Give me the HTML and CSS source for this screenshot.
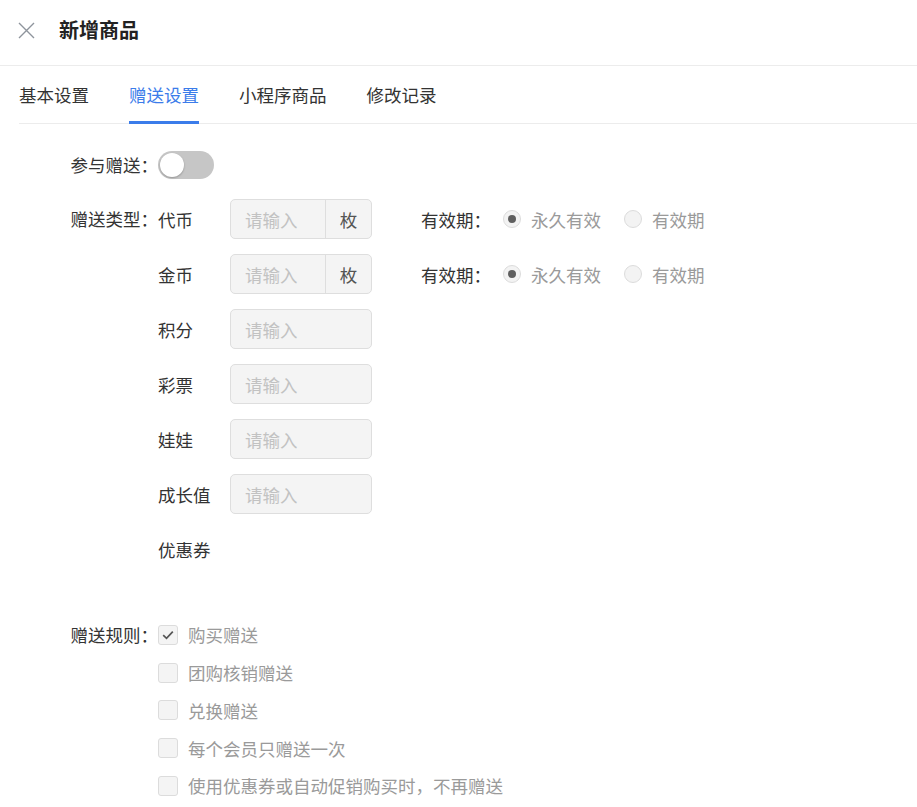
FILE: index.html
```html
<!DOCTYPE html>
<html lang="zh-CN">
<head>
<meta charset="utf-8">
<title>新增商品</title>
<link rel="stylesheet" href="styles.css">
</head>
<body>
<div class="page">
  <header class="header">
    <svg class="close" viewBox="0 0 17 17" width="17" height="17"><path d="M1 1L16 16M16 1L1 16" stroke="#8e949c" stroke-width="1.4" fill="none"/></svg>
    <h1 class="title">新增商品</h1>
  </header>
  <nav class="tabs">
    <span class="tab">基本设置</span>
    <span class="tab active">赠送设置</span>
    <span class="tab">小程序商品</span>
    <span class="tab">修改记录</span>
  </nav>
  <div class="form">
    <div class="row row-switch">
      <div class="label">参与赠送：</div>
      <div class="switch"><span class="knob"></span></div>
    </div>
    <div class="row">
      <div class="label">赠送类型：</div>
      <div class="types">
        <div class="type-row">
          <span class="type-name">代币</span>
          <div class="input"><span class="ph">请输入</span><span class="addon">枚</span></div>
          <div class="validity">
            <span class="vlabel">有效期：</span>
            <span class="radio-item"><span class="radio checked"></span>永久有效</span>
            <span class="radio-item"><span class="radio"></span>有效期</span>
          </div>
        </div>
        <div class="type-row">
          <span class="type-name">金币</span>
          <div class="input"><span class="ph">请输入</span><span class="addon">枚</span></div>
          <div class="validity">
            <span class="vlabel">有效期：</span>
            <span class="radio-item"><span class="radio checked"></span>永久有效</span>
            <span class="radio-item"><span class="radio"></span>有效期</span>
          </div>
        </div>
        <div class="type-row">
          <span class="type-name">积分</span>
          <div class="input"><span class="ph">请输入</span></div>
        </div>
        <div class="type-row">
          <span class="type-name">彩票</span>
          <div class="input"><span class="ph">请输入</span></div>
        </div>
        <div class="type-row">
          <span class="type-name">娃娃</span>
          <div class="input"><span class="ph">请输入</span></div>
        </div>
        <div class="type-row">
          <span class="type-name">成长值</span>
          <div class="input"><span class="ph">请输入</span></div>
        </div>
        <div class="type-row">
          <span class="type-name">优惠券</span>
        </div>
      </div>
    </div>
    <div class="row rules">
      <div class="label">赠送规则：</div>
      <div class="checks">
        <div class="check-item"><span class="checkbox checked"><svg viewBox="0 0 14 14" width="14" height="14"><path d="M2.2 7.2L5.5 10.3L11.8 3.6" stroke="#555" stroke-width="1.7" fill="none"/></svg></span>购买赠送</div>
        <div class="check-item"><span class="checkbox"></span>团购核销赠送</div>
        <div class="check-item"><span class="checkbox"></span>兑换赠送</div>
        <div class="check-item"><span class="checkbox"></span>每个会员只赠送一次</div>
        <div class="check-item"><span class="checkbox"></span>使用优惠券或自动促销购买时，不再赠送</div>
      </div>
    </div>
  </div>
</div>
</body>
</html>
```

FILE: styles.css
```css
* { box-sizing: border-box; }
html, body {
  margin: 0;
  padding: 0;
  background: #fff;
}
body {
  font-family: "Noto Sans CJK SC", "Microsoft YaHei", "Noto Sans", sans-serif;
  font-size: 17.5px;
  color: #333;
}
.header {
  height: 66px;
  border-bottom: 1px solid #ececec;
  display: flex;
  align-items: center;
  padding-left: 18px;
  padding-bottom: 5px;
}
.close {
  display: block;
  margin-right: 24px;
}
.title {
  margin: 0;
  font-size: 20px;
  font-weight: bold;
  color: #222;
  line-height: 28px;
}
.tabs {
  margin-left: 19px;
  display: flex;
  gap: 40px;
  border-bottom: 1px solid #ececec;
}
.tab {
  padding-top: 17px;
  padding-bottom: 14px;
  line-height: 24px;
  border-bottom: 3px solid transparent;
  margin-bottom: -1px;
  color: #333;
}
.tab.active {
  color: #3b7cea;
  border-bottom-color: #3b7cea;
}
.form {
  padding-top: 21px;
  padding-left: 19px;
}
.row {
  display: flex;
  align-items: flex-start;
}
.label {
  width: 139px;
  text-align: right;
  line-height: 40px;
  color: #333;
  flex-shrink: 0;
}
.row-switch {
  height: 40px;
  align-items: center;
  margin-bottom: 14px;
}
.switch {
  width: 56px;
  height: 28px;
  border-radius: 14px;
  background: #c6c6c6;
  padding: 2px;
  display: flex;
  align-items: center;
}
.knob {
  width: 24px;
  height: 24px;
  border-radius: 50%;
  background: #fff;
  box-shadow: 0 1px 2px rgba(0,0,0,0.25);
}
.types {
  display: flex;
  flex-direction: column;
  gap: 15px;
}
.type-row {
  display: flex;
  align-items: center;
  height: 40px;
}
.type-name {
  width: 72px;
  color: #333;
}
.input {
  width: 142px;
  height: 40px;
  border: 1px solid #dedede;
  border-radius: 5px;
  background: #f4f4f4;
  display: flex;
  align-items: center;
}
.ph {
  flex: 1;
  padding-left: 14px;
  color: #c2c2c2;
}
.addon {
  width: 46px;
  height: 100%;
  border-left: 1px solid #dedede;
  display: flex;
  align-items: center;
  justify-content: center;
  color: #555;
}
.validity {
  margin-left: 49px;
  display: flex;
  align-items: center;
}
.vlabel {
  color: #333;
  margin-right: 12px;
}
.radio-item {
  display: flex;
  align-items: center;
  color: #9a9a9a;
  margin-right: 23px;
}
.radio {
  width: 18px;
  height: 18px;
  border-radius: 50%;
  border: 1px solid #dcdcdc;
  background: #f3f3f3;
  margin-right: 10px;
  display: flex;
  align-items: center;
  justify-content: center;
}
.radio.checked::after {
  content: "";
  width: 8px;
  height: 8px;
  border-radius: 50%;
  background: #5f5f5f;
}
.rules {
  margin-top: 47px;
}
.rules .label {
  line-height: 37.75px;
}
.checks {
  display: flex;
  flex-direction: column;
}
.check-item {
  height: 37.75px;
  display: flex;
  align-items: center;
  color: #9a9a9a;
}
.checkbox {
  width: 20px;
  height: 20px;
  border: 1px solid #dcdcdc;
  border-radius: 3px;
  background: #f4f4f4;
  margin-right: 10px;
  display: flex;
  align-items: center;
  justify-content: center;
}
```
